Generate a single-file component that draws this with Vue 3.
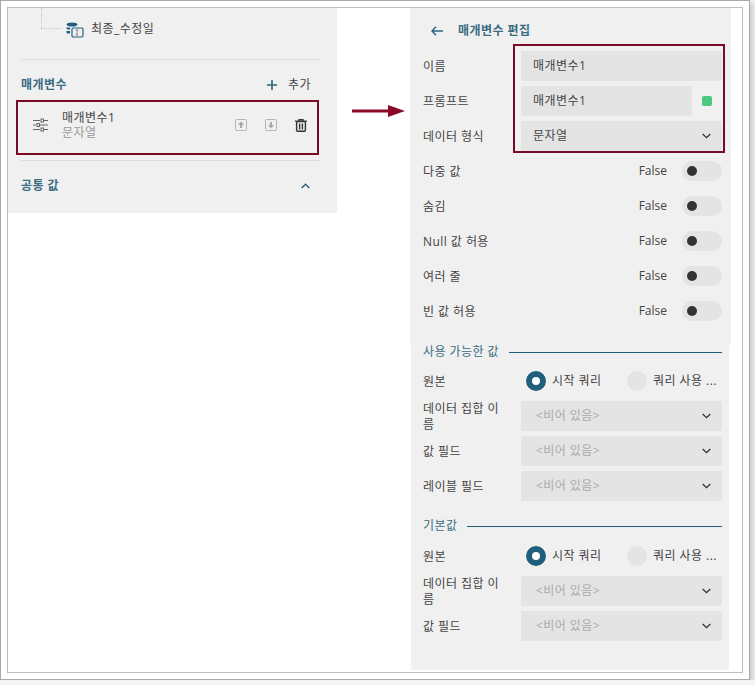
<script setup>
const topFields = ['다중 값', '숨김', 'Null 값 허용', '여러 줄', '빈 값 허용']
const available = ['데이터 집합 이름', '값 필드', '레이블 필드']
const defaults = ['데이터 집합 이름', '값 필드']
</script>

<template>
  <div class="outer">
    <div class="inner">
      <section class="left">
        <div class="tree">
          <span class="tree-v"></span>
          <span class="tree-h"></span>
          <svg class="db" width="18" height="16" viewBox="0 0 18 16">
            <ellipse cx="6" cy="2.5" rx="5.5" ry="2" fill="#1f5f7c" />
            <path d="M.5 5.5h3.5v2H2L.5 7zM.5 9h3.5v2.5H2L.5 11z" fill="#1f5f7c" />
            <rect x="6" y="6" width="11" height="9" rx="1.2" fill="#f0f0f0" stroke="#1f5f7c" stroke-width="1.2" />
            <path d="M9.5 8h3M11 8v5M9.5 13h3" stroke="#888" stroke-width="1" fill="none" />
          </svg>
          <span class="tree-text">최종_수정일</span>
        </div>
        <div class="rule"></div>
        <div class="left-head">
          <span class="head-title">매개변수</span>
          <span class="add">
            <svg width="10" height="10" viewBox="0 0 10 10"><path d="M5 0v10M0 5h10" stroke="#2b6480" stroke-width="1.6" /></svg>
            <span>추가</span>
          </span>
        </div>
        <div class="item">
          <svg class="filter" width="15" height="14" viewBox="0 0 15 14" fill="none">
            <path d="M0 2.5h7M11 2.5h4M0 7h3M7 7h8M0 11.5h7M11 11.5h4" stroke="#666" stroke-width="1" />
            <rect x="8" y="1" width="2.5" height="3" stroke="#666" stroke-width="1" />
            <rect x="4" y="5.5" width="2.5" height="3" stroke="#666" stroke-width="1" />
            <rect x="8" y="10" width="2.5" height="3" stroke="#666" stroke-width="1" />
          </svg>
          <div class="item-text">
            <div class="item-name">매개변수1</div>
            <div class="item-type">문자열</div>
          </div>
          <svg class="move" width="12" height="12" viewBox="0 0 12 12">
            <rect x=".5" y=".5" width="11" height="11" rx="1" fill="#f0f0f0" stroke="#b5b5b5" />
            <path d="M6 2.5 9 6H7v3H5V6H3z" fill="#a8a8a8" />
          </svg>
          <svg class="move" width="12" height="12" viewBox="0 0 12 12">
            <rect x=".5" y=".5" width="11" height="11" rx="1" fill="#f0f0f0" stroke="#b5b5b5" />
            <path d="M6 9.5 9 6H7V3H5v3H3z" fill="#a8a8a8" />
          </svg>
          <svg class="trash" width="12" height="13" viewBox="0 0 12 13" fill="none">
            <path d="M0 2.2h12M4 2V.7h4V2" stroke="#333" stroke-width="1.3" />
            <rect x="1.6" y="2.6" width="8.8" height="9.6" rx="1" stroke="#333" stroke-width="1.4" />
            <path d="M4.6 4.5v6M7.4 4.5v6" stroke="#333" stroke-width="1.4" />
          </svg>
        </div>
        <div class="rule rule-after"></div>
        <div class="common">
          <span class="head-title">공통 값</span>
          <svg width="9" height="6" viewBox="0 0 9 6" fill="none"><path d="M.7 5 4.5 1.3 8.3 5" stroke="#2b6480" stroke-width="1.5" /></svg>
        </div>
      </section>

      <svg class="arrow" width="53" height="12" viewBox="0 0 53 12">
        <path d="M0 6h38" stroke="#8a0a26" stroke-width="3" />
        <path d="M36 0 53 6 36 12z" fill="#8a0a26" />
      </svg>

      <section class="right">
        <div class="upper">
          <div class="edit-head">
            <svg width="12" height="10" viewBox="0 0 12 10" fill="none"><path d="M12 5H1M5 .8 1 5l4 4.2" stroke="#2b6480" stroke-width="1.4" /></svg>
            <span class="head-title">매개변수 편집</span>
          </div>
          <div class="row">
            <span class="label">이름</span>
            <div class="field">매개변수1</div>
          </div>
          <div class="row">
            <span class="label">프롬프트</span>
            <div class="field short">매개변수1</div>
            <span class="swatch"></span>
          </div>
          <div class="row">
            <span class="label">데이터 형식</span>
            <div class="field select">
              <span>문자열</span>
              <svg class="chev" width="9" height="6" viewBox="0 0 9 6" fill="none"><path d="M.7 1 4.5 4.7 8.3 1" stroke="#333" stroke-width="1.3" /></svg>
            </div>
          </div>
          <div v-for="name in topFields" :key="name" class="row">
            <span class="label grow">{{ name }}</span>
            <span class="false">False</span>
            <span class="toggle"><i></i></span>
          </div>
          <div class="highlight"></div>
        </div>

        <div class="lower">
          <div class="sec-title"><span>사용 가능한 값</span><b></b></div>
          <div class="row radio-row">
            <span class="label">원본</span>
            <span class="radio on"></span><span class="radio-text first">시작 쿼리</span>
            <span class="radio"></span><span class="radio-text">쿼리 사용 ...</span>
          </div>
          <div v-for="name in available" :key="name" class="row">
            <span class="label wrap">{{ name }}</span>
            <div class="field select empty">
              <span>&lt;비어 있음&gt;</span>
              <svg class="chev" width="9" height="6" viewBox="0 0 9 6" fill="none"><path d="M.7 1 4.5 4.7 8.3 1" stroke="#333" stroke-width="1.3" /></svg>
            </div>
          </div>
          <div class="sec-title second"><span>기본값</span><b></b></div>
          <div class="row radio-row">
            <span class="label">원본</span>
            <span class="radio on"></span><span class="radio-text first">시작 쿼리</span>
            <span class="radio"></span><span class="radio-text">쿼리 사용 ...</span>
          </div>
          <div v-for="name in defaults" :key="name" class="row">
            <span class="label wrap">{{ name }}</span>
            <div class="field select empty">
              <span>&lt;비어 있음&gt;</span>
              <svg class="chev" width="9" height="6" viewBox="0 0 9 6" fill="none"><path d="M.7 1 4.5 4.7 8.3 1" stroke="#333" stroke-width="1.3" /></svg>
            </div>
          </div>
        </div>
      </section>
    </div>
  </div>
</template>

<style>
html, body { background: #f4f4f4; }
</style>

<style scoped>
.outer {
  box-sizing: border-box;
  width: 750px;
  height: 680px;
  padding: 6px;
  background: #fff;
  border: 1px solid #a9a9a9;
  box-shadow: 3px 3px 4px #ccc;
  font: 12px/16px "Open Sans", "Noto Sans CJK KR", sans-serif;
  letter-spacing: 0.45px;
  color: #444;
}
.inner {
  box-sizing: border-box;
  position: relative;
  display: flex;
  align-items: flex-start;
  height: 666px;
  border: 1px solid #bdbdbd;
}
.left {
  box-sizing: border-box;
  width: 329px;
  height: 205px;
  padding: 0 16px 0 13px;
  background: #f0f0f0;
}
.tree {
  position: relative;
  height: 51px;
}
.tree-v {
  position: absolute;
  left: 20px;
  top: 0;
  height: 20px;
  border-left: 1px dotted #c4c4c4;
}
.tree-h {
  position: absolute;
  left: 20px;
  top: 20px;
  width: 20px;
  border-top: 1px dotted #c4c4c4;
}
.db { position: absolute; left: 45px; top: 14px; }
.tree-text { position: absolute; left: 70px; top: 13px; }
.rule { height: 1px; background: #dcdcdc; }
.rule-after { margin-top: 5px; }
.left-head {
  box-sizing: border-box;
  display: flex;
  align-items: center;
  justify-content: space-between;
  height: 40px;
  padding: 9px 10px 0 0;
}
.head-title { font-weight: 600; color: #3b6c82; }
.add { display: flex; align-items: center; gap: 11px; }
.item {
  box-sizing: border-box;
  display: flex;
  align-items: center;
  width: 303px;
  height: 55px;
  margin-left: -5px;
  padding: 0 0 5px 15px;
  border: 2px solid #7a0a24;
}
.item-text { width: 173px; margin: 0 0 1px 14px; line-height: 15px; }
.item-type { color: #999; }
.move { margin-right: 18px; }
.common {
  display: flex;
  align-items: center;
  justify-content: space-between;
  height: 50px;
  padding-right: 11px;
}
.arrow { position: absolute; left: 344px; top: 97px; }
.right {
  margin-left: 73px;
  width: 321px;
}
.upper {
  box-sizing: border-box;
  position: relative;
  height: 337px;
  padding: 12px 9px 0 13px;
  background: #f0f0f0;
}
.edit-head {
  display: flex;
  align-items: center;
  gap: 15px;
  height: 20px;
  margin-bottom: 11px;
  padding: 1px 0 0 8px;
  box-sizing: border-box;
}
.row {
  display: flex;
  align-items: center;
  height: 30px;
  margin-bottom: 5px;
}
.label { flex: none; width: 98px; padding-top: 1px; box-sizing: border-box; }
.label.grow { flex: 1; }
.label.wrap { width: 80px; margin-right: 18px; word-break: break-all; }
.field {
  box-sizing: border-box;
  flex: 1;
  display: flex;
  align-items: center;
  justify-content: space-between;
  height: 30px;
  padding: 0 11px 0 12px;
  background: #e4e4e4;
  border-radius: 2px;
}
.field.short { flex: none; width: 171px; }
.field.empty { color: #aaa; padding-left: 15px; }
.swatch {
  width: 10px;
  height: 10px;
  margin-left: 10px;
  border-radius: 2px;
  background: #4cc97f;
}
.false { margin-right: 15px; letter-spacing: 0; }
.toggle {
  display: flex;
  align-items: center;
  width: 40px;
  height: 20px;
  padding-left: 5px;
  box-sizing: border-box;
  border-radius: 10px;
  background: #e4e4e4;
}
.toggle i {
  width: 10px;
  height: 10px;
  border-radius: 50%;
  background: #333;
}
.highlight {
  position: absolute;
  left: 103px;
  top: 36px;
  box-sizing: border-box;
  width: 212px;
  height: 109px;
  border: 2px solid #7a0a24;
}
.lower {
  box-sizing: border-box;
  width: 318px;
  height: 325px;
  margin-left: 1px;
  padding: 0 7px 0 12px;
  background: #f0f0f0;
}
.sec-title {
  display: flex;
  align-items: center;
  gap: 10px;
  height: 14px;
  margin-bottom: 7px;
  color: #3b6c82;
}
.sec-title b { flex: 1; height: 1px; background: #1f5f7c; }
.second { margin-top: 18px; margin-bottom: 8px; }
.radio-row .label { width: 103px; }
.radio {
  box-sizing: border-box;
  flex: none;
  width: 20px;
  height: 20px;
  border-radius: 50%;
  background: #e4e4e4;
}
.radio.on { background: #fff; border: 6px solid #1f5f7c; }
.radio-text { margin-left: 6px; white-space: nowrap; }
.radio-text.first { width: 75px; }
</style>
